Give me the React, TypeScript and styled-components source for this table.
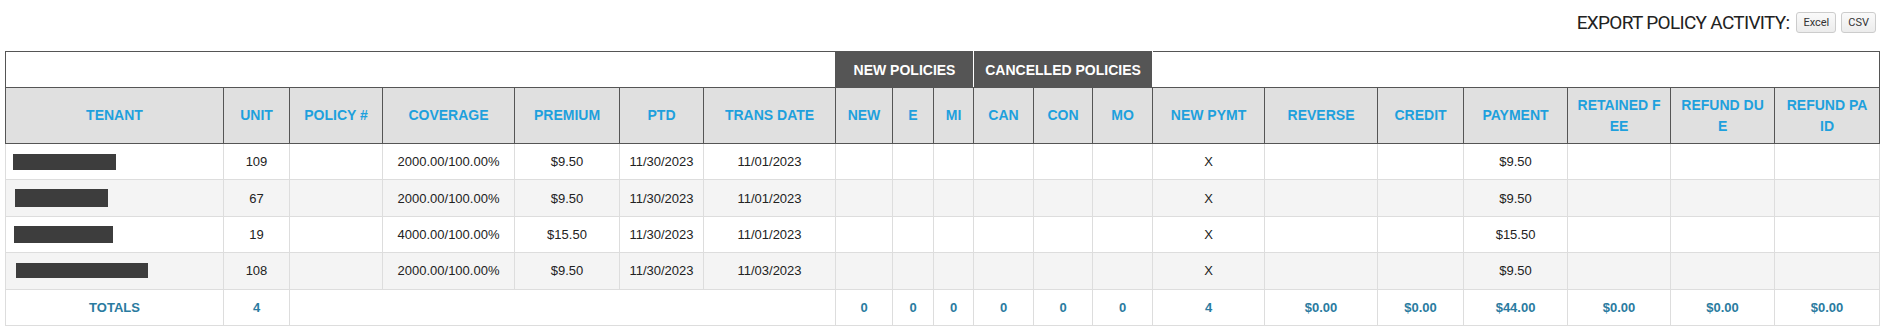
import React from "react";
import styled, { createGlobalStyle } from "styled-components";

const GlobalStyle = createGlobalStyle`
  body {
    margin: 0;
    background: #ffffff;
    font-family: "Liberation Sans", Arial, sans-serif;
  }
`;

const COLUMNS: { label: React.ReactNode; width: number }[] = [
  { label: "TENANT", width: 218 },
  { label: "UNIT", width: 66 },
  { label: "POLICY #", width: 93 },
  { label: "COVERAGE", width: 132 },
  { label: "PREMIUM", width: 105 },
  { label: "PTD", width: 84 },
  { label: "TRANS DATE", width: 132 },
  { label: "NEW", width: 57 },
  { label: "E", width: 41 },
  { label: "MI", width: 40 },
  { label: "CAN", width: 60 },
  { label: "CON", width: 59 },
  { label: "MO", width: 60 },
  { label: "NEW PYMT", width: 112 },
  { label: "REVERSE", width: 113 },
  { label: "CREDIT", width: 86 },
  { label: "PAYMENT", width: 104 },
  { label: <>RETAINED F<br />EE</>, width: 103 },
  { label: <>REFUND DU<br />E</>, width: 104 },
  { label: <>REFUND PA<br />ID</>, width: 105 },
];

type Row = {
  bar: { width: number; height: number; offset: number };
  unit: string;
  coverage: string;
  premium: string;
  ptd: string;
  transDate: string;
  payment: string;
};

const ROWS: Row[] = [
  { bar: { width: 103, height: 16, offset: 7 }, unit: "109", coverage: "2000.00/100.00%", premium: "$9.50", ptd: "11/30/2023", transDate: "11/01/2023", payment: "$9.50" },
  { bar: { width: 93, height: 18, offset: 9 }, unit: "67", coverage: "2000.00/100.00%", premium: "$9.50", ptd: "11/30/2023", transDate: "11/01/2023", payment: "$9.50" },
  { bar: { width: 99, height: 17, offset: 8 }, unit: "19", coverage: "4000.00/100.00%", premium: "$15.50", ptd: "11/30/2023", transDate: "11/01/2023", payment: "$15.50" },
  { bar: { width: 132, height: 15, offset: 10 }, unit: "108", coverage: "2000.00/100.00%", premium: "$9.50", ptd: "11/30/2023", transDate: "11/03/2023", payment: "$9.50" },
];

const TOTALS = ["0", "0", "0", "0", "0", "0", "4", "$0.00", "$0.00", "$44.00", "$0.00", "$0.00", "$0.00"];

const Page = styled.div`
  padding: 0 6px 0 5px;
`;

const ExportBar = styled.div`
  display: flex;
  justify-content: flex-end;
  align-items: center;
  gap: 5px;
  height: 22px;
  padding: 11px 3px 0 0;
  margin-bottom: 18px;
`;

const ExportLabel = styled.span`
  font-family: Roboto, "Liberation Sans", sans-serif;
  font-size: 19px;
  letter-spacing: -0.7px;
  color: #222222;
  margin-right: 2px;
`;

const ExportButton = styled.button`
  font-family: Roboto, "Liberation Sans", sans-serif;
  font-size: 11px;
  color: #333333;
  height: 21px;
  padding: 0 6px;
  background: linear-gradient(#fafafa, #ececec);
  border: 1px solid #cccccc;
  border-radius: 3px;
  cursor: pointer;
`;

const Table = styled.table`
  width: 1874px;
  table-layout: fixed;
  border-collapse: collapse;
  font-size: 13px;
  color: #222222;
`;

const GroupRow = styled.tr`
  height: 36px;
`;

const BlankGroupCell = styled.th<{ $side: "left" | "right" }>`
  background: #ffffff;
  border-top: 1px solid #555555;
  border-bottom: 1px solid #555555;
  border-${(p) => p.$side}: 1px solid #555555;
  padding: 0;
`;

const GroupCell = styled.th`
  background: #555555;
  color: #ffffff;
  font-size: 14px;
  font-weight: bold;
  text-align: center;
  border-top: 1px solid #555555;
  border-left: 1px solid #555555;
  border-right: 1px solid #ffffff;
  border-bottom: 1px solid #555555;
  padding: 0;
`;

const HeadRow = styled.tr`
  height: 56px;
`;

const HeadCell = styled.th`
  background: #e0e0e0;
  color: #1ea0dd;
  font-size: 14px;
  font-weight: bold;
  line-height: 21px;
  text-align: center;
  vertical-align: middle;
  border: 1px solid #555555;
  padding: 0 4px;
`;

const BodyRow = styled.tr<{ $striped: boolean }>`
  height: 36.4px;
  background: ${(p) => (p.$striped ? "#f4f4f4" : "#ffffff")};
`;

const Cell = styled.td`
  border: 1px solid #dddddd;
  text-align: center;
  vertical-align: middle;
  padding: 0 4px;
  white-space: nowrap;
`;

const TenantCell = styled(Cell)`
  text-align: left;
  padding: 0;
`;

const Redacted = styled.span<{ $width: number; $height: number; $offset: number }>`
  display: block;
  width: ${(p) => p.$width}px;
  height: ${(p) => p.$height}px;
  margin-left: ${(p) => p.$offset}px;
  background: #3d3d3d;
`;

const TotalCell = styled(Cell)`
  color: #2a7ba0;
  font-weight: bold;
`;

export default function App() {
  return (
    <Page>
      <GlobalStyle />
      <ExportBar>
        <ExportLabel>EXPORT POLICY ACTIVITY:</ExportLabel>
        <ExportButton>Excel</ExportButton>
        <ExportButton>CSV</ExportButton>
      </ExportBar>
      <Table>
        <colgroup>
          {COLUMNS.map((c, i) => (
            <col key={i} style={{ width: c.width }} />
          ))}
        </colgroup>
        <thead>
          <GroupRow>
            <BlankGroupCell $side="left" colSpan={7} />
            <GroupCell colSpan={3}>NEW POLICIES</GroupCell>
            <GroupCell colSpan={3}>CANCELLED POLICIES</GroupCell>
            <BlankGroupCell $side="right" colSpan={7} />
          </GroupRow>
          <HeadRow>
            {COLUMNS.map((c, i) => (
              <HeadCell key={i}>{c.label}</HeadCell>
            ))}
          </HeadRow>
        </thead>
        <tbody>
          {ROWS.map((r, i) => (
            <BodyRow key={i} $striped={i % 2 === 1}>
              <TenantCell>
                <Redacted $width={r.bar.width} $height={r.bar.height} $offset={r.bar.offset} />
              </TenantCell>
              <Cell>{r.unit}</Cell>
              <Cell />
              <Cell>{r.coverage}</Cell>
              <Cell>{r.premium}</Cell>
              <Cell>{r.ptd}</Cell>
              <Cell>{r.transDate}</Cell>
              <Cell />
              <Cell />
              <Cell />
              <Cell />
              <Cell />
              <Cell />
              <Cell>X</Cell>
              <Cell />
              <Cell />
              <Cell>{r.payment}</Cell>
              <Cell />
              <Cell />
              <Cell />
            </BodyRow>
          ))}
          <BodyRow $striped={false}>
            <TotalCell>TOTALS</TotalCell>
            <TotalCell>4</TotalCell>
            <TotalCell colSpan={5} />
            {TOTALS.map((t, i) => (
              <TotalCell key={i}>{t}</TotalCell>
            ))}
          </BodyRow>
        </tbody>
      </Table>
    </Page>
  );
}
